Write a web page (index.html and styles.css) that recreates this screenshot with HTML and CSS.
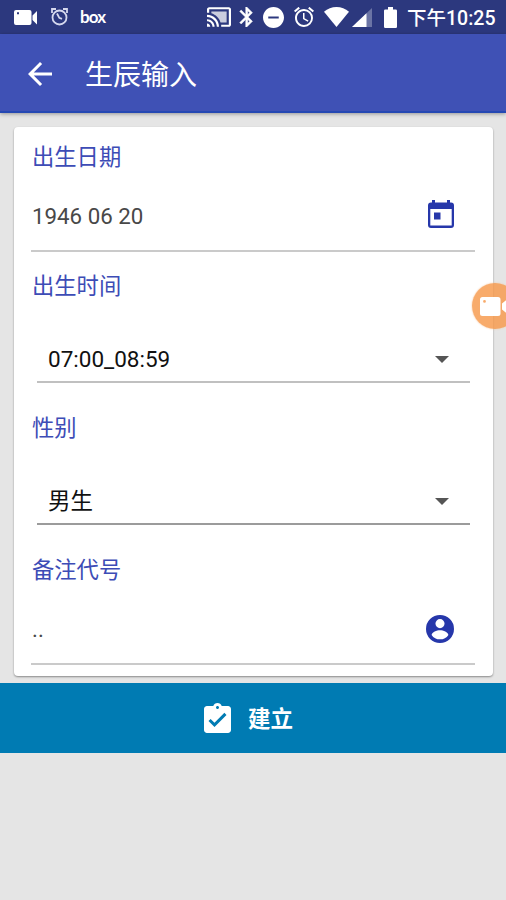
FILE: index.html
```html
<!DOCTYPE html>
<html lang="zh-CN">
<head>
<meta charset="utf-8">
<title>生辰输入</title>
<link rel="stylesheet" href="styles.css">
</head>
<body>
<div class="status">
  <svg class="video" width="23" height="15" viewBox="0 0 23 15"><path fill-rule="evenodd" d="M2 0H15.500a2 2 0 0 1 2 2V13a2 2 0 0 1-2 2H2a2 2 0 0 1-2-2V2a2 2 0 0 1 2-2zM3 2.300v2h2v-2zM18.500 5.500L23 1V14.500L18.500 10z"/></svg>
  <svg class="clock" width="17" height="18" viewBox="0 0 17 18"><g fill="none" stroke="#d5d8ee" stroke-width="1.800"><circle cx="8.500" cy="9.500" r="7"/><path d="M1 5V1H5M12 1h4v4M6 5.500l2.300 4.300 2.700 1"/></g></svg>
  <span class="box">box</span>
  <svg class="cast" width="24" height="20" viewBox="1 3 22 18"><path d="M21 3H3c-1.100 0-2 .9-2 2v3h2V5h18v14h-7v2h7c1.100 0 2-.9 2-2V5c0-1.100-.9-2-2-2zM1 18v3h3c0-1.660-1.340-3-3-3zm0-4v2c2.760 0 5 2.240 5 5h2c0-3.870-3.130-7-7-7zm0-4v2c4.970 0 9 4.030 9 9h2c0-6.080-4.930-11-11-11z"/><path opacity=".75" d="M5 7v1.600c4 1.300 7.200 4.400 8.400 8.400H19V7z"/></svg>
  <svg class="bluetooth" width="14" height="20" viewBox="4.500 2 13.500 20"><path stroke="currentColor" stroke-width=".5" d="M17.710 7.710L12 2h-1v7.590L6.410 5 5 6.410 10.590 12 5 17.590 6.410 19 11 14.410V22h1l5.710-5.710-4.300-4.290 4.300-4.290zM13 5.830l1.880 1.880L13 9.590V5.830zm1.880 10.460L13 18.170v-3.760l1.880 1.880z"/></svg>
  <svg class="dnd" width="21" height="21" viewBox="2 2 20 20"><path d="M12 2C6.480 2 2 6.480 2 12s4.480 10 10 10 10-4.480 10-10S17.520 2 12 2zm5 11H7v-2h10v2z"/></svg>
  <svg class="alarm" width="20" height="20" viewBox="2 2 20 20"><path d="M22 5.720l-4.600-3.860-1.290 1.530 4.600 3.860L22 5.720zM7.880 3.390L6.600 1.860 2 5.710l1.290 1.530 4.590-3.850zM12.500 8H11v6l4.750 2.850.75-1.230-4-2.370V8zM12 4c-4.970 0-9 4.030-9 9s4.020 9 9 9a9 9 0 0 0 0-18zm0 16c-3.870 0-7-3.130-7-7s3.130-7 7-7 7 3.130 7 7-3.130 7-7 7z"/></svg>
  <svg class="wifi" width="25" height="20" viewBox="0 0 25 20"><path d="M12.500 20L0 4.700C3.500 1.600 7.800 0 12.500 0S21.500 1.600 25 4.700z"/></svg>
  <svg class="signal" width="20" height="19" viewBox="0 0 20 19"><path opacity=".3" d="M0 19L20 0V19z"/><path d="M0 19L14.500 5.200V19z"/></svg>
  <svg class="battery" width="13" height="21" viewBox="0 0 13 21"><path d="M4 0h5v2.500h2.700Q13 2.500 13 3.800v15.900Q13 21 11.700 21H1.300Q0 21 0 19.700V3.800Q0 2.500 1.300 2.500H4z"/></svg>
  <span class="time">下午10:25</span>
</div>
<header class="appbar">
  <svg width="24" height="24" viewBox="4 4 16 16"><path d="M20 11H7.830l5.590-5.590L12 4l-8 8 8 8 1.410-1.410L7.830 13H20v-2z"/></svg>
  <h1>生辰输入</h1>
</header>
<main>
  <section class="card">
    <div class="label">出生日期</div>
    <div class="field">
      <span>1946 06 20</span>
      <svg class="calendar" width="26" height="28" viewBox="0 0 26 28"><path fill-rule="evenodd" d="M4 0h3v2.500h12V0h3v2.500h1a3 3 0 0 1 3 3V25a3 3 0 0 1-3 3H3a3 3 0 0 1-3-3V5.500a3 3 0 0 1 3-3h1zM2.300 9v16.500h21.400V9z"/><path d="M6 12.500h6.500v7H6z"/></svg>
    </div>
    <div class="label second">出生时间</div>
    <div class="select"><span>07:00_08:59</span><i class="caret"></i></div>
    <div class="label third">性别</div>
    <div class="select gender"><span>男生</span><i class="caret"></i></div>
    <div class="label fourth">备注代号</div>
    <div class="field note">
      <span>..</span>
      <svg class="person" width="28" height="28" viewBox="2 2 20 20"><path fill-rule="evenodd" d="M12 2a10 10 0 1 0 0 20 10 10 0 0 0 0-20zm0 2.900a3.250 3.250 0 1 1 0 6.500 3.250 3.250 0 0 1 0-6.500zM12 19.400c-2.500 0-4.700-1.200-6-3.200.3-1.900 3.600-3.300 6-3.300s5.700 1.400 6 3.300c-1.300 2-3.500 3.200-6 3.200z"/></svg>
    </div>
  </section>
  <button class="create">
    <svg width="27" height="30" viewBox="3 1 18 20"><path d="M19 3h-4.180C14.400 1.840 13.300 1 12 1s-2.400.84-2.820 2H5c-1.100 0-2 .9-2 2v14c0 1.100.9 2 2 2h14c1.100 0 2-.9 2-2V5c0-1.100-.9-2-2-2zm-7 0c.55 0 1 .45 1 1s-.45 1-1 1-1-.45-1-1 .45-1 1-1zm-2 14l-4-4 1.410-1.410L10 14.170l6.590-6.590L18 9l-8 8z"/></svg>
    <span>建立</span>
  </button>
</main>
<div class="recorder">
  <svg width="29" height="19" viewBox="0 0 29 19"><path fill-rule="evenodd" d="M2.500 0H18a2.500 2.500 0 0 1 2.500 2.500v14A2.500 2.500 0 0 1 18 19H2.500A2.500 2.500 0 0 1 0 16.500v-14A2.500 2.500 0 0 1 2.500 0zM4.500 3a1.400 1.400 0 1 0 0 2.800 1.400 1.400 0 0 0 0-2.800zM22 6.500L29 1v17l-7-5.500z"/></svg>
</div>
</body>
</html>
```
FILE: styles.css
```css
* { box-sizing: border-box; }
html, body { height: 100%; }
body {
  margin: 0;
  position: relative;
  overflow: hidden;
  background: #e5e5e5;
  font-family: Roboto, "Noto Sans CJK SC", sans-serif;
}
svg { display: block; flex: none; fill: currentColor; }
.status {
  display: flex;
  align-items: center;
  height: 34px;
  padding-left: 14px;
  background: #2c387e;
  color: #fff;
  white-space: nowrap;
}
.clock { margin-left: 14px; }
.box {
  width: 27px;
  margin-left: 12px;
  font: bold 17px/20px Lato, sans-serif;
  letter-spacing: -0.9px;
}
.cast { margin-left: 100px; }
.bluetooth { margin-left: 8px; }
.dnd { margin-left: 10px; }
.alarm { margin-left: 10px; }
.wifi { margin-left: 10px; }
.signal { margin-left: 3px; }
.battery { margin-left: 12px; }
.time {
  margin-left: 10px;
  padding-top: 3px;
  font-size: 19.5px;
  line-height: 31px;
  font-weight: 500;
}
.appbar {
  position: relative;
  display: flex;
  align-items: center;
  height: 79px;
  padding: 2px 0 0 28px;
  background: #3f51b5;
  border-bottom: 2px solid #2548b3;
  box-shadow: 0 1px 4px rgba(0, 0, 0, .35);
  color: #fff;
}
h1 { margin: 0 0 0 33px; padding-top: 4px; font-size: 28px; line-height: 40px; font-weight: 400; }
.card {
  height: 549px;
  margin: 14px 13px 0 14px;
  padding: 15px 18px 0;
  background: #fff;
  border-radius: 4px;
  box-shadow: 0 1px 2px rgba(0, 0, 0, .4);
}
.label {
  height: 30px;
  font-size: 22.300px;
  line-height: 30px;
  font-weight: 400;
  color: #3d4cb6;
}
.field {
  display: flex;
  align-items: center;
  justify-content: space-between;
  height: 70px;
  margin: 10px 0 0 -1px;
  padding: 0 21px 0 1px;
  border-bottom: 2px solid #cacaca;
  color: #484848;
  font-size: 22.300px;
}
.calendar, .person { color: #2637aa; }
.calendar { margin-top: -4px; }
.second { margin-top: 19px; }
.select {
  display: flex;
  align-items: center;
  justify-content: space-between;
  height: 46px;
  margin: 36px 5px 0;
  padding: 0 21px 0 11px;
  border-bottom: 2px solid #c0c0c0;
  color: #111;
  font-size: 22.500px;
}
.caret {
  width: 0;
  height: 0;
  border: 7px solid transparent;
  border-top-color: #555;
  border-bottom: 0;
}
.third, .fourth { margin-top: 30px; }
.gender { border-bottom-color: #9b9b9b; }
.gender span { padding-bottom: 4px; }
.note { height: 70px; }
.create {
  display: flex;
  align-items: center;
  justify-content: center;
  width: 100%;
  height: 70px;
  margin-top: 7px;
  padding: 0 9px 0 0;
  gap: 17px;
  border: 0;
  background: #007bb3;
  color: #fff;
  font: bold 22.500px/30px "Noto Sans CJK SC", sans-serif;
}
.create span { padding-bottom: 3px; }
.recorder {
  position: absolute;
  top: 283px;
  left: 472px;
  display: flex;
  align-items: center;
  width: 46px;
  height: 46px;
  padding-left: 8px;
  border-radius: 50%;
  background: rgba(247, 152, 74, .82);
  box-shadow: 0 0 2px #f7c49a;
  color: #fff;
}
```
